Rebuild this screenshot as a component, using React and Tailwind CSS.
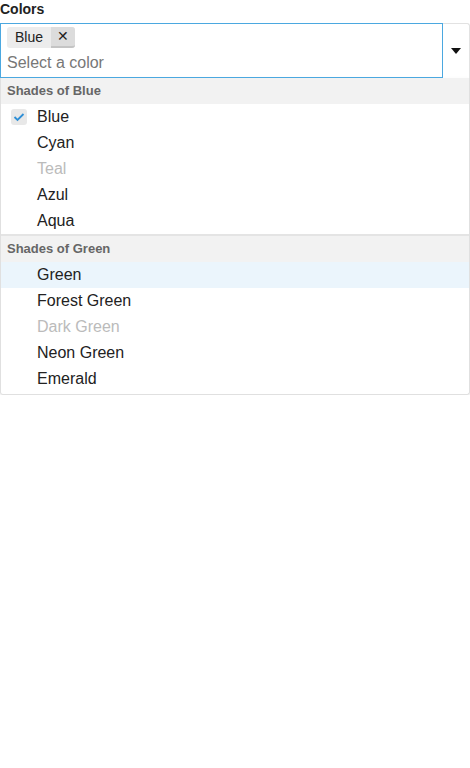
import React from "react";

const groups = [
  {
    label: "Shades of Blue",
    items: [
      { name: "Blue", checked: true },
      { name: "Cyan" },
      { name: "Teal", disabled: true },
      { name: "Azul" },
      { name: "Aqua" },
    ],
  },
  {
    label: "Shades of Green",
    items: [
      { name: "Green", active: true },
      { name: "Forest Green" },
      { name: "Dark Green", disabled: true },
      { name: "Neon Green" },
      { name: "Emerald" },
    ],
  },
];

export default function App() {
  return (
    <div className="w-[470px] bg-white text-[#222] font-['Liberation_Sans',Arial,sans-serif]">
      <div className="h-[23px] text-[14px] font-bold leading-[18px]">Colors</div>
      <div className="flex h-[55px]">
        <div className="w-[443px] border border-[#4ba8e0] pl-[6px] pt-[3px]">
          <div className="flex">
            <div className="flex h-[21px] rounded-[3px] bg-[#ececec] text-[14px] leading-[21px]">
              <span className="px-[8px]">Blue</span>
              <span className="flex w-[24px] items-center justify-center rounded-r-[3px] border-b-2 border-[#c4c4c4] bg-[#dcdcdc] text-[14px]">
                ✕
              </span>
            </div>
          </div>
          <div className="mt-[5px] text-[16px] leading-[20px] text-[#777]">Select a color</div>
        </div>
        <div className="flex flex-1 items-center justify-center rounded-tr-[3px] border-t border-r border-[#e2e2e2]">
          <svg width="10" height="6" viewBox="0 0 10 6">
            <path d="M0 0h10L5 6z" fill="#111" />
          </svg>
        </div>
      </div>
      <div className="rounded-b-[3px] border border-t-0 border-[#e0e0e0] pb-[2px] shadow-[0_2px_4px_rgba(0,0,0,0.08)]">
        {groups.map((g, gi) => (
          <div key={g.label} className={gi > 0 ? "border-t-2 border-[#e4e4e4]" : ""}>
            <div className="h-[26px] bg-[#f2f2f2] pl-[6px] text-[13px] font-bold leading-[26px] text-[#666]">
              {g.label}
            </div>
            {g.items.map((it) => (
              <div
                key={it.name}
                className={`flex h-[26px] items-center text-[16px] ${it.active ? "bg-[#ebf5fc]" : ""} ${
                  it.disabled ? "text-[#bbb]" : "text-[#222]"
                }`}
              >
                <div className="flex w-[36px] pl-[10px]">
                  {it.checked && (
                    <div className="flex h-[16px] w-[16px] items-center justify-center rounded-[3px] bg-[#e8e8e8]">
                      <svg width="12" height="10" viewBox="0 0 12 10">
                        <path d="M1.5 5l3 3L10.5 2" fill="none" stroke="#2f8fd6" strokeWidth="1.8" />
                      </svg>
                    </div>
                  )}
                </div>
                <span>{it.name}</span>
              </div>
            ))}
          </div>
        ))}
      </div>
    </div>
  );
}
